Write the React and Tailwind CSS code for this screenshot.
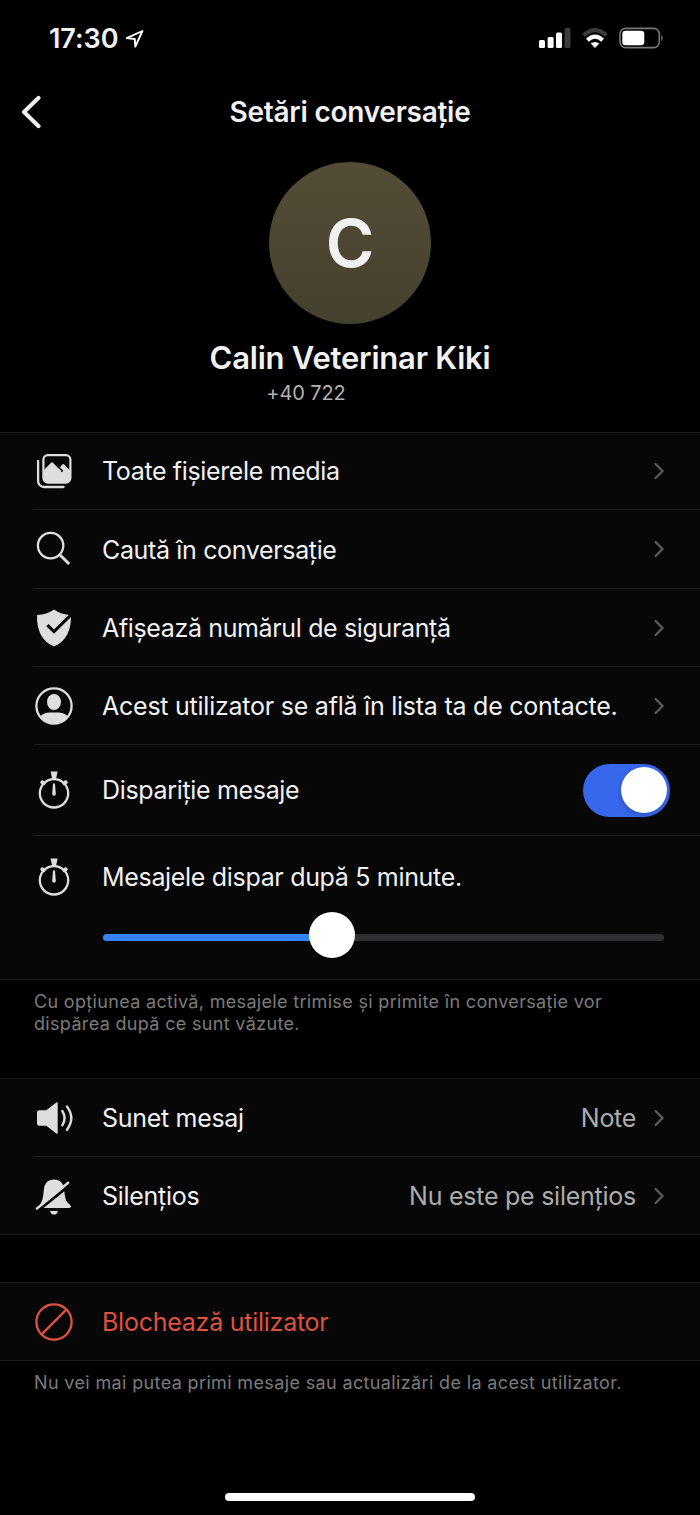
import React from "react";

function MediaIcon() {
  return (
    <svg viewBox="0 0 40 40" className="w-10 h-10" fill="none">
      <path d="M4.1 10V30a6 6 0 0 0 6 6H29.5" stroke="#dedede" strokeWidth="2.3" strokeLinecap="round" />
      <rect x="9.4" y="4.2" width="27" height="27.4" rx="4.5" stroke="#dedede" strokeWidth="2.2" />
      <path
        d="M10 18.9L17.1 11.8q.9-.9 1.8 0L24.6 17.4L28.4 13.4q.9-.9 1.8 0L36 19.2V27.5a4 4 0 0 1-4 4H14a4 4 0 0 1-4-4Z"
        fill="#dedede"
      />
      <path d="M24.2 15.8L28.3 19.8L27.3 20.8" stroke="#070707" strokeWidth="1.4" />
    </svg>
  );
}

function SearchIcon() {
  return (
    <svg viewBox="0 0 40 40" className="w-10 h-10" fill="none" stroke="#dedede">
      <circle cx="16.6" cy="16.6" r="12.7" strokeWidth="2.3" />
      <path d="M26.3 26.3L35.2 35" strokeWidth="3" />
    </svg>
  );
}

function ShieldIcon() {
  return (
    <svg viewBox="0 0 40 40" className="w-10 h-10">
      <path
        d="M20 1.6C15.5 5.2 9.5 7 3.1 7C2.4 21 7.5 33.5 20 38.5C32.5 33.5 37.6 21 36.9 7C30.5 7 24.5 5.2 20 1.6Z"
        fill="#dedede"
      />
      <path d="M13.4 17.2L20 23.6L37 6.8" fill="none" stroke="#070707" strokeWidth="3.1" />
    </svg>
  );
}

function ContactIcon() {
  return (
    <svg viewBox="0 0 40 40" className="w-10 h-10">
      <circle cx="20" cy="20" r="17.6" fill="none" stroke="#dedede" strokeWidth="2.3" />
      <ellipse cx="20" cy="16" rx="7" ry="8.1" fill="#dedede" />
      <path d="M6 30.6C8.5 28 12 26.6 15.5 26.6H24.5C28 26.6 31.5 28 34 30.6C31 35 26 37.8 20 37.8S9 35 6 30.6Z" fill="#dedede" />
    </svg>
  );
}

function TimerIcon() {
  return (
    <svg viewBox="0 0 40 40" className="w-10 h-10" fill="#dedede">
      <circle cx="20" cy="23.3" r="14.2" fill="none" stroke="#dedede" strokeWidth="2.3" />
      <path d="M16.6 1.6H23.6L22 9H18.2Z" />
      <circle cx="8.4" cy="12.2" r="2" />
      <circle cx="31.6" cy="12.2" r="2" />
      <path d="M8.4 12.2L11 14.5M31.6 12.2L29 14.5" stroke="#dedede" strokeWidth="2.4" />
      <path d="M19 13.6h2L21.8 24a1.8 1.8 0 1 1-3.6 0Z" />
    </svg>
  );
}

function SoundIcon() {
  return (
    <svg viewBox="0 0 40 40" className="w-10 h-10" fill="#dedede">
      <path d="M5.4 12.2H12.3L22.3 4.6Q23.7 3.8 23.7 5.3V34.8Q23.7 36.4 22.3 35.4L12.3 27.8H5.4Q3 27.8 3 25.4V14.6Q3 12.2 5.4 12.2Z" />
      <g fill="none" stroke="#dedede" strokeWidth="2.4" strokeLinecap="round">
        <path d="M28.3 13Q32.9 20 28.3 27.3" />
        <path d="M33 8.6Q41.6 20 33 31.8" />
      </g>
    </svg>
  );
}

function MutedIcon() {
  return (
    <svg viewBox="0 0 40 40" className="w-10 h-10" fill="#dedede">
      <path d="M20 3.4C26 3.4 29.4 7.2 30 12.5C30.8 19.5 31.3 24 33.5 26.5C35.3 28.4 37 29.2 37 30.6Q37 32 35 32H5Q5.5 28.6 7.5 26C9.3 22.5 9.4 17.5 10 12.5C10.6 7.2 14 3.4 20 3.4Z" />
      <path d="M0 38L36 8.8" fill="none" stroke="#070707" strokeWidth="2.8" />
      <path d="M2.8 32.6L34.2 6.7" fill="none" stroke="#dedede" strokeWidth="2.4" strokeLinecap="round" />
      <path d="M16 34.9H24Q23 38.5 20 38.5T16 34.9Z" />
    </svg>
  );
}

function BlockIcon() {
  return (
    <svg viewBox="0 0 40 40" className="w-10 h-10" fill="none" stroke="#df5240" strokeWidth="2.3">
      <circle cx="20" cy="20" r="17.6" />
      <path d="M7.6 32.4L32.4 7.6" />
    </svg>
  );
}

function Chevron() {
  return (
    <svg viewBox="0 0 12 18" className="w-3 h-[18px] shrink-0" fill="none">
      <path d="M2.6 2L9.6 9L2.6 16" stroke="#5a5a5a" strokeWidth="2.4" strokeLinecap="round" strokeLinejoin="round" />
    </svg>
  );
}

function Row({ icon, label, labelClass, value, valueClass, className, last, children }) {
  return (
    <div className="pl-[34px]">
      <div className={`flex items-center pr-[35px] ${last ? "" : "border-b border-[#1d1d1d]"} ${className}`}>
        {icon}
        <span className={`ml-7 flex-1 whitespace-nowrap text-[25px] leading-8 ${labelClass}`}>{label}</span>
        {value && <span className={`mr-[17px] whitespace-nowrap text-[25px] leading-8 text-[#acacac] ${valueClass}`}>{value}</span>}
        {children || <Chevron />}
      </div>
    </div>
  );
}

function StatusBar() {
  return (
    <div className="flex h-[76px] items-center justify-between pl-[49px] pr-[35px]">
      <div className="flex items-center pt-px">
        <span className="text-[27px] font-semibold leading-8 tracking-[-0.05px]">17:30</span>
        <svg viewBox="0 0 20 20" className="ml-[7px] h-5 w-5" fill="none">
          <path d="M1.7 9.1L17.4 2L10.3 17.6L9.8 10Z" stroke="#fff" strokeWidth="1.9" strokeLinejoin="round" />
        </svg>
      </div>
      <div className="flex items-center">
        <svg viewBox="0 0 32 20" className="h-5 w-8" fill="#fff">
          <rect x="0" y="12" width="6" height="8" rx="1.5" />
          <rect x="8.6" y="9" width="6" height="11" rx="1.5" />
          <rect x="17" y="4.5" width="6" height="15.5" rx="1.5" />
          <rect x="25.5" y="0" width="6" height="20" rx="1.5" fill="#3b3b3b" />
        </svg>
        <svg viewBox="0 0 26 20" className="ml-[11px] h-5 w-[26px]" fill="none" strokeWidth="4">
          <path d="M1.5 7.4Q13 -3.2 24.5 7.4" stroke="#3b3b3b" />
          <path d="M5.4 12.2Q13 5.2 20.6 12.2" stroke="#fff" />
          <path d="M13 20L8.7 15.6Q13 12.2 17.3 15.6Z" fill="#fff" />
        </svg>
        <svg viewBox="0 0 46 22" className="ml-[11px] h-[22px] w-[46px]" fill="none">
          <rect x="1" y="1.4" width="39.3" height="19.2" rx="5.6" stroke="#777" strokeWidth="1.6" />
          <rect x="3.3" y="3.8" width="22" height="14.4" rx="3.2" fill="#fff" />
          <path d="M42.3 7.8Q45.2 11 42.3 14.2Z" fill="#777" />
        </svg>
      </div>
    </div>
  );
}

export default function App() {
  return (
    <div className="flex h-[1515px] w-[700px] flex-col overflow-hidden bg-black font-['Inter',sans-serif] text-[#f1f1f1]">
      <StatusBar />

      <header className="grid h-[72px] grid-cols-[1fr_auto_1fr] items-center">
        <svg viewBox="0 0 20 34" className="ml-[21px] h-[34px] w-5" fill="none">
          <path d="M17.6 2.8L3 17L17.6 31.2" stroke="#f1f1f1" strokeWidth="4" strokeLinecap="round" strokeLinejoin="round" />
        </svg>
        <h1 className="text-[28px] font-semibold leading-8 tracking-[-0.25px]">Setări conversație</h1>
      </header>

      <section className="flex h-[284px] flex-col items-center pt-[14px]">
        <div className="mb-px flex h-[162px] w-[162px] items-center justify-center rounded-full bg-gradient-to-b from-[#534d37] to-[#453f2e]">
          <span className="text-[66px] font-semibold leading-none">C</span>
        </div>
        <h2 className="mt-[13px] text-[31px] font-semibold leading-10 tracking-[-0.22px]">Calin Veterinar Kiki</h2>
        <p className="mr-[88px] mt-[3px] text-[20px] leading-6 tracking-[-0.1px] text-[#b2b2b2]">+40 722</p>
      </section>

      <section className="h-[548px] border-y border-[#1d1d1d] bg-[#070707]">
        <Row className="h-[77px]" icon={<MediaIcon />} label="Toate fișierele media" labelClass="tracking-[-0.36px]" />
        <Row className="h-[79px]" icon={<SearchIcon />} label="Caută în conversație" labelClass="pt-0.5 tracking-[-0.35px]" />
        <Row className="h-[78px]" icon={<ShieldIcon />} label="Afișează numărul de siguranță" labelClass="tracking-[-0.36px]" />
        <Row className="h-[78px]" icon={<ContactIcon />} label="Acest utilizator se află în lista ta de contacte." labelClass="tracking-[-0.24px]" />
        <Row className="h-[91px]" icon={<TimerIcon />} label="Dispariție mesaje" labelClass="tracking-[-0.33px]">
          <div className="-mr-[5px] flex h-[53px] w-[87px] shrink-0 items-center justify-end rounded-full bg-[#3767ec] pr-[3px]">
            <div className="h-[46px] w-[46px] rounded-full bg-white shadow-[-1px_2px_5px_rgba(0,0,0,0.2)]" />
          </div>
        </Row>
        <Row last className="h-[82px]" icon={<TimerIcon />} label="Mesajele dispar după 5 minute." labelClass="tracking-[-0.32px]">
          <span />
        </Row>
        <div className="ml-[103px] mr-[36px] -mt-[6px] flex h-[46px] items-center">
          <div className="mt-1 h-[7px] w-[208px] rounded-l-full bg-[#3583fb]" />
          <div className="z-10 -mx-[2px] h-[46px] w-[46px] shrink-0 rounded-full bg-white" />
          <div className="mt-1 h-[7px] flex-1 rounded-r-full bg-[#2f2f31]" />
        </div>
      </section>
      <p className="h-[98px] whitespace-nowrap pl-[34px] pt-[11px] text-[18px] leading-[22px] tracking-[0.33px] text-[#7b7b7b]">
        Cu opțiunea activă, mesajele trimise și primite în conversație vor
        <br />
        dispărea după ce sunt văzute.
      </p>

      <section className="border-y border-[#1d1d1d] bg-[#070707]">
        <Row className="h-[78px]" icon={<SoundIcon />} label="Sunet mesaj" labelClass="tracking-[-0.3px]" value="Note" valueClass="tracking-[-0.3px]" />
        <Row last className="h-[77px]" icon={<MutedIcon />} label="Silențios" labelClass="tracking-[-0.28px]" value="Nu este pe silențios" valueClass="tracking-[-0.25px]" />
      </section>

      <section className="mt-[47px] border-y border-[#1d1d1d] bg-[#070707]">
        <Row last className="h-[77px]" icon={<BlockIcon />} label="Blochează utilizator" labelClass="tracking-[-0.25px] text-[#df5240]">
          <span />
        </Row>
      </section>
      <p className="whitespace-nowrap pl-[34px] pt-[11px] text-[18px] leading-[22px] tracking-[0.36px] text-[#7b7b7b]">
        Nu vei mai putea primi mesaje sau actualizări de la acest utilizator.
      </p>

      <div className="mx-auto mb-[14px] mt-auto h-2 w-[250px] rounded-full bg-white" />
    </div>
  );
}
